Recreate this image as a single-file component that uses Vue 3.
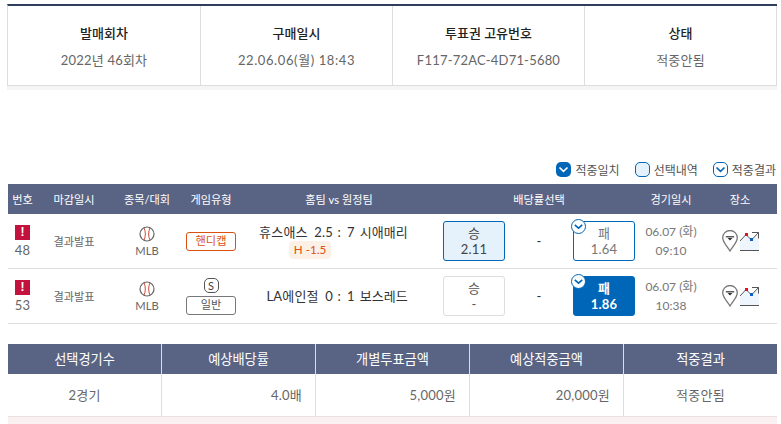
<script setup>
const info = [
  { title: '발매회차', value: '2022년 46회차', wide: false },
  { title: '구매일시', value: '22.06.06(월) 18:43', wide: true },
  { title: '투표권 고유번호', value: 'F117-72AC-4D71-5680', wide: false },
  { title: '상태', value: '적중안됨', wide: false },
]
const heads = ['번호', '마감일시', '종목/대회', '게임유형', '홈팀 vs 원정팀', '배당률선택', '경기일시', '장소']
const rows = [
  { no: 48, home: '휴스애스 2.5', away: '7 시애매리', handi: 'H -1.5', type: '핸디캡', win: '2.11', winOn: true, lose: '1.64', loseOn: false, date: '06.07 (화)', time: '09:10' },
  { no: 53, home: 'LA에인절 0', away: '1 보스레드', type: '일반', special: true, win: '-', winOn: false, lose: '1.86', loseOn: true, date: '06.07 (화)', time: '10:38' },
]
const summary = [
  ['선택경기수', '2경기', 'c'],
  ['예상배당률', '4.0배', 'r'],
  ['개별투표금액', '5,000원', 'r'],
  ['예상적중금액', '20,000원', 'r'],
  ['적중결과', '적중안됨', 'c'],
]
</script>

<template>
  <div class="page">
    <section class="info">
      <div v-for="item in info" :key="item.title" class="info-cell">
        <div class="info-title">{{ item.title }}</div>
        <div class="info-value" :class="{ wide: item.wide }">{{ item.value }}</div>
      </div>
    </section>
    <div class="info-shade"></div>

    <div class="legend">
      <span class="legend-item">
        <span class="lg-box solid"><svg viewBox="0 0 15 15"><path d="M3.5 5.500 7.500 9.300l4-3.800" fill="none" stroke="#fff" stroke-width="1.700"/></svg></span>적중일치
      </span>
      <span class="legend-item"><span class="lg-box pale"></span>선택내역</span>
      <span class="legend-item">
        <span class="lg-box line"><svg viewBox="0 0 15 15"><path d="M3.5 5.500 7.500 9.300l4-3.800" fill="none" stroke="#0067b8" stroke-width="1.700"/></svg></span>적중결과
      </span>
    </div>

    <div class="grid head">
      <div v-for="h in heads" :key="h">{{ h }}</div>
    </div>
    <div v-for="r in rows" :key="r.no" class="grid row">
      <div class="no">
        <span class="alert">!</span>
        <span class="no-num">{{ r.no }}</span>
      </div>
      <div>결과발표</div>
      <div class="sport">
        <svg class="ball" viewBox="0 0 16 16">
          <circle cx="8" cy="8" r="7" fill="#fff" stroke="#666" stroke-width="1.200"/>
          <path d="M5 1.800c1.800 3.800 1.800 8.600 0 12.400M11 1.800c-1.800 3.800-1.800 8.600 0 12.400" fill="none" stroke="#c8503c" stroke-width="1"/>
        </svg>
        <span>MLB</span>
      </div>
      <div class="type">
        <span v-if="r.special" class="special">S</span>
        <span class="tag" :class="{ handi: r.handi }">{{ r.type }}</span>
      </div>
      <div class="match">
        <span class="home">{{ r.home }}</span>
        <span class="colon">:</span>
        <span class="away">{{ r.away }}</span>
        <span v-if="r.handi" class="handi-val">{{ r.handi }}</span>
      </div>
      <div class="odds">
        <div class="pick" :class="{ chosen: r.winOn }">
          <span class="pick-line">승</span><span class="pick-line">{{ r.win }}</span>
        </div>
        <span class="dash">-</span>
        <div class="pick result" :class="{ hit: r.loseOn }">
          <span class="check"><svg viewBox="0 0 15 15"><path d="M3.800 5.800 7.500 9.100l3.700-3.300" fill="none" stroke="#0067b8" stroke-width="1.600"/></svg></span>
          <span class="pick-line">패</span><span class="pick-line">{{ r.lose }}</span>
        </div>
      </div>
      <div class="date"><span class="date-line">{{ r.date }}</span><span class="date-line">{{ r.time }}</span></div>
      <div class="place">
        <svg class="pin" viewBox="0 0 16 22">
          <path d="M8 21C5.500 16.500.7 12.500.7 7.800a7.300 7.300 0 0 1 14.600 0C15.300 12.500 10.500 16.500 8 21Z" fill="#fff" stroke="#777" stroke-width="1.300"/>
          <path d="M3.800 6.800h8.400" stroke="#333" stroke-width="1.200"/>
          <path d="M5.500 8h5L8 10.500Z" fill="#333"/>
        </svg>
        <svg class="chart" viewBox="0 0 19 19">
          <path d="M0 9 6 2.500 11.500 8 19 .5V18H0Z" fill="#eef5fc"/>
          <path d="M0 18.500h19" stroke="#555" stroke-width="1"/>
          <path d="M0 9 6 2.500 11.500 8 18.500 .5M12 .5h6.500v6" fill="none" stroke="#555" stroke-width="1"/>
          <rect x="5" y="1" width="3" height="3" fill="#e0102a"/>
          <rect x="10" y="6" width="3" height="3" fill="#0a5fc0"/>
        </svg>
      </div>
    </div>

    <div class="sum sum-head">
      <div v-for="s in summary" :key="s[0]">{{ s[0] }}</div>
    </div>
    <div class="sum sum-body">
      <div v-for="s in summary" :key="s[0]" :class="s[2]">{{ s[1] }}</div>
    </div>
    <div class="pink"></div>
  </div>
</template>

<style scoped>
.page {
  width: 777px;
  height: 424px;
  overflow: hidden;
  padding: 4px 0 0 8px;
  box-sizing: border-box;
  background: #fff;
  color: #666;
  font-family: Lato, "Noto Sans CJK KR", "Noto Sans", sans-serif;
  font-size: 11.2px;
}
.info {
  display: grid;
  grid-template-columns: 193px 192px 192px 192px;
  width: 770px;
  height: 82px;
  box-sizing: border-box;
  border-top: 2px solid #2f3e5c;
  border-bottom: 1px solid #ddd;
  border-left: 1px solid #ddd;
  margin-left: -1px;
}
.info-cell {
  border-right: 1px solid #ddd;
  text-align: center;
  display: flex;
  flex-direction: column;
  align-items: center;
  padding-top: 18px;
  gap: 8px;
}
.info-title { color: #222; font-size: 13px; font-weight: 500; line-height: 19px; }
.info-value { color: #666; font-size: 13px; line-height: 19px; letter-spacing: 0.2px; }
.info-value.wide { letter-spacing: 0.6px; }
.info-shade { height: 4px; margin-left: -1px; background: #f5f5f5; }

.legend {
  display: flex;
  justify-content: flex-end;
  gap: 15px;
  margin-top: 70px;
  height: 24px;
  padding: 2px 1px 0 0;
  box-sizing: border-box;
  align-items: flex-start;
  color: #555;
  font-family: "Noto Sans CJK KR", sans-serif;
  font-size: 12px;
}
.legend-item { display: flex; align-items: center; gap: 4px; line-height: 14px; white-space: nowrap; }
.lg-box {
  width: 15px; height: 15px; border-radius: 5px; box-sizing: border-box; display: block;
}
.lg-box svg { display: block; width: 15px; height: 15px; }
.lg-box.solid { background: #0067b8; }
.lg-box.pale { background: #e6f2fb; border: 1px solid #0067b8; }
.lg-box.line { background: #fff; border: 1px solid #0067b8; }
.lg-box.line svg { margin: -1px; }

.grid {
  display: grid;
  grid-template-columns: 29px 74px 72px 56px 200px 200px 64px 74px;
  align-items: center;
  text-align: center;
}
.head {
  height: 30px;
  background: #596485;
  color: #fff;
  padding-bottom: 1px;
  box-sizing: border-box;
}
.row {
  height: 55px;
  box-sizing: border-box;
  border-bottom: 1px solid #ddd;
}
.no { display: flex; flex-direction: column; align-items: center; gap: 2px; padding-top: 2px; }
.no-num { display: block; font-size: 13px; line-height: 17px; letter-spacing: 0.2px; }
.alert {
  display: block;
  width: 15px; height: 15px; background: #c4123f; color: #fff; font-size: 12px; font-weight: 700; line-height: 15px;
  font-family: "Liberation Sans", sans-serif;
}
.sport { display: flex; flex-direction: column; align-items: center; line-height: 17px; padding-top: 2px; }
.ball { width: 16px; height: 16px; display: block; }
.type { display: flex; flex-direction: column; align-items: center; gap: 3px; }
.special {
  display: block; box-sizing: border-box;
  width: 15px; height: 15px; border: 1px solid #555; border-radius: 5px; font-size: 11px; line-height: 13px; color: #444;
}
.tag {
  display: block;
  width: 50px; height: 19px; box-sizing: border-box; border: 1px solid #777; border-radius: 3px; line-height: 16px; color: #555;
}
.tag.handi { border-color: #d9500f; color: #d9500f; }
.match {
  display: grid;
  grid-template-columns: 1fr 12px 1fr;
  align-items: center;
  color: #333;
  font-size: 13px;
  line-height: 18px;
  white-space: nowrap;
}
.home { text-align: right; word-spacing: 3px; letter-spacing: 0.2px; }
.colon { text-align: center; }
.away { text-align: left; padding-left: 2px; word-spacing: 2px; }
.handi-val {
  grid-column: 1;
  justify-self: end;
  margin-right: 2px;
  width: 42px;
  box-sizing: border-box;
  text-align: center;
  background: #fdf1e7;
  color: #d9500f;
  font-size: 11.6px;
  line-height: 18px;
  border-radius: 4px;
}
.odds { display: flex; justify-content: space-between; align-items: center; padding: 0 4px; }
.dash { color: #333; font-size: 13px; }
.pick {
  position: relative;
  width: 62px; height: 40px; box-sizing: border-box; border: 1px solid #ddd; border-radius: 3px;
  display: flex; flex-direction: column; align-items: center; justify-content: center;
  font-size: 13px; color: #555;
}
.pick-line { display: block; height: 16px; line-height: 16px; overflow: hidden; letter-spacing: 0.2px; }
.pick.chosen { background: #e6f2fb; border-color: #0067b8; color: #444; }
.pick.result { border-color: #0067b8; color: #777; }
.pick.hit { background: #0067b8; color: #fff; font-weight: 700; }
.check {
  position: absolute; left: -3px; top: -3px; width: 15px; height: 15px; border-radius: 50%; background: #fff; border: 1px solid #0067b8;
  box-sizing: border-box;
}
.check svg { display: block; width: 15px; height: 15px; margin: -1px; }
.date { display: flex; flex-direction: column; align-items: center; color: #777; font-size: 12px; padding-bottom: 1px; }
.date-line { display: block; height: 19px; line-height: 19px; }
.place { display: flex; justify-content: center; align-items: center; gap: 2px; padding-right: 0; }
.pin { width: 16px; height: 22px; display: block; }
.chart { width: 19px; height: 19px; display: block; }

.sum {
  display: grid;
  grid-template-columns: 153px repeat(4, 154px);
}
.sum-head {
  margin-top: 20px;
  height: 30px;
  background: #596485;
  color: #fff;
  font-size: 13.2px;
  line-height: 30px;
  text-align: center;
}
.sum-head > div + div { border-left: 1px solid #ddd; }
.sum-body { height: 43px; box-sizing: border-box; font-size: 13px; line-height: 42px; color: #666; border-bottom: 1px solid #e8e0e0; letter-spacing: 0.25px; }
.sum-body > div + div { border-left: 1px solid #ddd; }
.c { text-align: center; }
.r { text-align: right; padding-right: 13px; }
.pink { height: 12px; background: #fbf0f1; }
</style>
